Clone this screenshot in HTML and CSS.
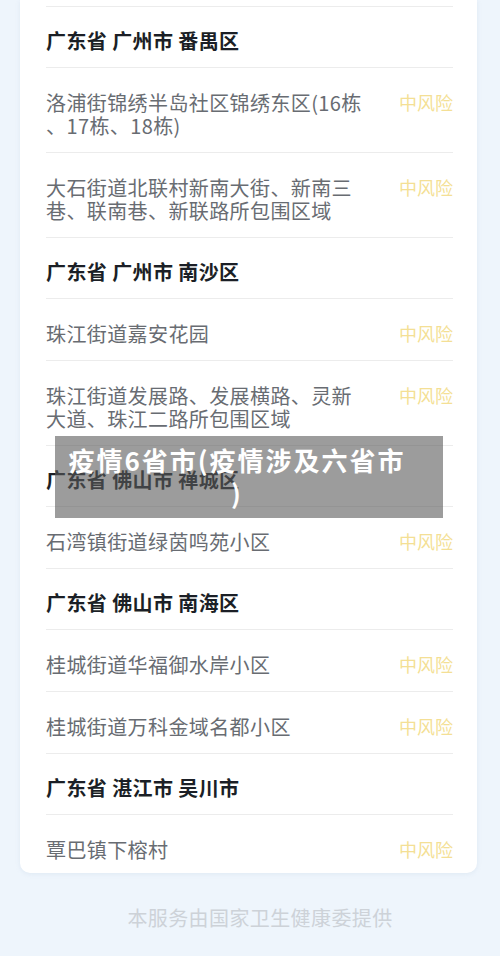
FILE: index.html
```html
<!DOCTYPE html>
<html>
<head>
    <meta charset="utf-8">
    <meta name="viewport" content="width=device-width, initial-scale=1">
    <link rel="stylesheet" href="styles.css">
</head>
<body>
    <div class="page">

        <div class="card">
            <div class="area">广东省 广州市 番禺区</div>
            <div class="spot">
                <span class="place">洛浦街锦绣半岛社区锦绣东区(16栋、17栋、18栋)</span>
                <span class="level">中风险</span>
            </div>
            <div class="spot">
                <span class="place">大石街道北联村新南大街、新南三巷、联南巷、新联路所包围区域</span>
                <span class="level">中风险</span>
            </div>

            <div class="area">广东省 广州市 南沙区</div>
            <div class="spot">
                <span class="place">珠江街道嘉安花园</span>
                <span class="level">中风险</span>
            </div>
            <div class="spot">
                <span class="place">珠江街道发展路、发展横路、灵新大道、珠江二路所包围区域</span>
                <span class="level">中风险</span>
            </div>

            <div class="area">广东省 佛山市 禅城区</div>
            <div class="spot">
                <span class="place">石湾镇街道绿茵鸣苑小区</span>
                <span class="level">中风险</span>
            </div>

            <div class="area">广东省 佛山市 南海区</div>
            <div class="spot">
                <span class="place">桂城街道华福御水岸小区</span>
                <span class="level">中风险</span>
            </div>
            <div class="spot">
                <span class="place">桂城街道万科金域名都小区</span>
                <span class="level">中风险</span>
            </div>

            <div class="area">广东省 湛江市 吴川市</div>
            <div class="spot">
                <span class="place">覃巴镇下榕村</span>
                <span class="level">中风险</span>
            </div>
        </div>

        <div class="footer">本服务由国家卫生健康委提供</div>

        <!-- article title laid over the screenshot -->
        <div class="caption">疫情6省市(疫情涉及六省市)</div>
    </div>
</body>
</html>
```

FILE: styles.css
```css
html, body {
    margin: 0;
    height: 100%;
    overflow: hidden;
}

body {
    background-color: #eef5fc;
    font-family: "Noto Sans CJK SC", "Noto Sans", sans-serif;
}

.page {
    position: relative;
    width: 500px;
    height: 956px;
}

.card {
    background-color: #ffffff;
    margin: 0 23px 0 20px;
    padding: 6px 24px 0 26px;
    border-radius: 0 0 10px 10px;
    box-shadow: 0 1px 4px rgba(180, 200, 220, 0.25);
}

.area {
    border-top: 1px solid #ececec;
    padding: 22px 0 14px;
    font-size: 20px;
    line-height: 24px;
    letter-spacing: 0.4px;
    font-weight: 700;
    color: #1b1f26;
}

.spot {
    border-top: 1px solid #ececec;
    padding: 23px 0 15px;
    display: flex;
    align-items: flex-start;
    gap: 33px;
}

.spot:last-child {
    padding-bottom: 12px;
}

.place {
    flex: 1;
    font-size: 20px;
    line-height: 23px;
    letter-spacing: 0.4px;
    color: #686c72;
    line-break: anywhere;
}

.level {
    font-size: 18px;
    line-height: 23px;
    color: #f4df95;
    white-space: nowrap;
}

.footer {
    text-align: center;
    margin-top: 33px;
    padding-left: 20px;
    font-size: 20px;
    line-height: 24px;
    letter-spacing: 0.4px;
    color: #cdd2d8;
}

.caption {
    position: absolute;
    left: 55px;
    top: 436px;
    width: 388px;
    height: 82px;
    box-sizing: border-box;
    padding: 7px 36px 0 12px;
    background-color: rgba(90, 90, 90, 0.6);
    color: #ffffff;
    font-size: 26px;
    line-height: 33px;
    letter-spacing: 2px;
    font-weight: 700;
    text-align: center;
    line-break: anywhere;
}
```
